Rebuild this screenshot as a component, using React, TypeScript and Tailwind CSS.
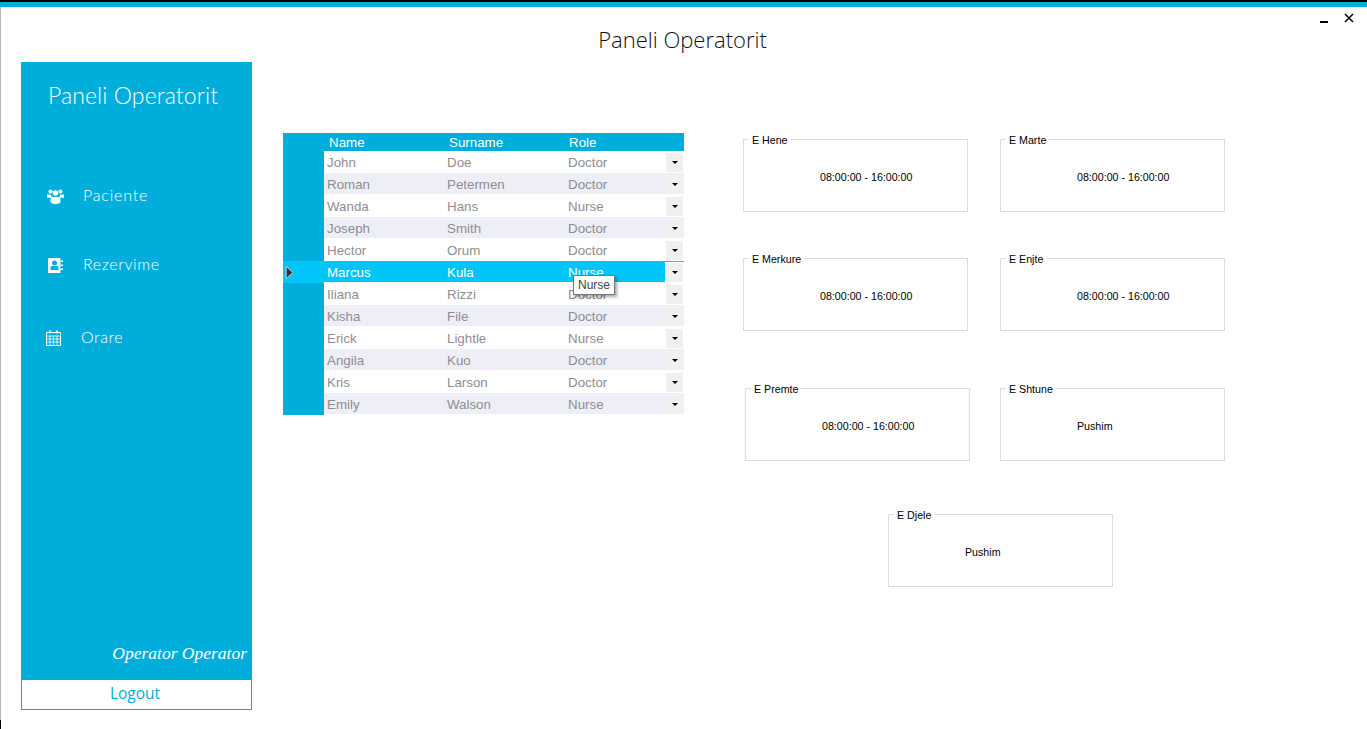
import React from 'react';

const staff = [
  ['John', 'Doe', 'Doctor'],
  ['Roman', 'Petermen', 'Doctor'],
  ['Wanda', 'Hans', 'Nurse'],
  ['Joseph', 'Smith', 'Doctor'],
  ['Hector', 'Orum', 'Doctor'],
  ['Marcus', 'Kula', 'Nurse'],
  ['Iliana', 'Rizzi', 'Doctor'],
  ['Kisha', 'File', 'Doctor'],
  ['Erick', 'Lightle', 'Nurse'],
  ['Angila', 'Kuo', 'Doctor'],
  ['Kris', 'Larson', 'Doctor'],
  ['Emily', 'Walson', 'Nurse'],
];

const UsersIcon = () => (
  <svg width="17" height="15" viewBox="0 0 17 15" fill="#fff">
    <circle cx="3.5" cy="2.5" r="2" />
    <circle cx="13.5" cy="2.5" r="2" />
    <circle cx="8.5" cy="4" r="2.8" />
    <path d="M0 5.5h3.6c.2 1 .7 1.8 1.4 2.3-.5.2-.9.5-1.2 1H0zM17 5.5h-3.6c-.2 1-.7 1.8-1.4 2.3.5.2.9.5 1.2 1H17z" />
    <path d="M5.6 8h5.8c1.4 0 2.1 1 2.1 2.4v2.2c0 1.4-1.6 2.4-5 2.4s-5-1-5-2.4v-2.2C3.500 9 4.200 8 5.600 8z" />
  </svg>
);

const BookIcon = () => (
  <svg width="15" height="15" viewBox="0 0 15 15">
    <rect x="0" y="0" width="12.500" height="15" rx="0.500" fill="#fff" />
    <path d="M13 2.500h2v1.500h-2zM13 6.500h2v1.500h-2zM13 10.500h2v1.500h-2z" fill="#fff" />
    <circle cx="6.500" cy="5" r="2.500" fill="#00aedb" />
    <path d="M2.500 12v-2c0-1.200 1-2 2-2h4c1 0 2 .8 2 2v2z" fill="#00aedb" />
  </svg>
);

const CalendarIcon = () => (
  <svg width="15" height="16" viewBox="0 0 15 16" fill="none" stroke="#fff" strokeWidth="1">
    <path d="M.5 2.500h14v13H.5z" />
    <path d="M.5 6h14M.5 9h14M.5 12h14M4 6v9.500M7.500 6v9.500M11 6v9.500" strokeWidth="0.800" />
    <path d="M4 .5v3M11 .5v3" strokeWidth="1.600" />
  </svg>
);

const DayBox = ({ day, hours }: { day: string; hours: string }) => (
  <fieldset className="w-[225px] h-[79px] border border-[#dcdcdc] px-0">
    <legend className="ml-[5px] px-[3px] pt-[1px] text-[10.67px] leading-[12px] text-black">{day}</legend>
    <p className="pl-[76px] pt-[25px] text-[10.67px] leading-[13px] text-black">{hours}</p>
  </fieldset>
);

const App = () => {
  return (
    <div className="relative w-[1367px] h-[729px] overflow-hidden bg-white font-['Liberation_Sans',sans-serif]">
      <div className="h-[2px] bg-black" />
      <div className="h-[5px] bg-[#00aedb]" />
      <div className="h-[713px] border-l border-[#b4b4b4]">
        <header className="relative h-[55px] flex justify-center pt-[16px]">
          <h1 className="mr-[3px] font-['Open_Sans',sans-serif] font-light text-[22px] leading-[32px] text-[#111]">Paneli Operatorit</h1>
          <div className="absolute right-[13px] top-[5px] flex items-start gap-[16px]">
            <div className="mt-[9px] w-[8px] h-[2px] bg-black" />
            <svg width="10" height="10" viewBox="0 0 10 10" className="mt-[1px]" stroke="#000" strokeWidth="1.5" fill="none">
              <path d="M1 1l8 8M9 1l-8 8" />
            </svg>
          </div>
        </header>

        <div className="flex items-start">
          <aside className="ml-[20px] w-[231px] h-[648px] flex flex-col font-['Lato',sans-serif] text-white bg-[#00aedb]">
            <div className="pl-[27px] pt-[17px] text-[23px] leading-[32px] font-light tracking-[0.1px]">Paneli Operatorit</div>
            <nav className="flex-1 font-light">
              <div className="flex items-center pl-[26px] mt-[73px] h-[24px]">
                <UsersIcon />
                <span className="ml-[19px] -mt-[3px] text-[16px] tracking-[0.8px]">Paciente</span>
              </div>
              <div className="flex items-center pl-[27px] mt-[45px] h-[24px]">
                <BookIcon />
                <span className="ml-[20px] -mt-[3px] text-[16px] tracking-[0.6px]">Rezervime</span>
              </div>
              <div className="flex items-center pl-[25px] mt-[49px] h-[24px]">
                <CalendarIcon />
                <span className="ml-[20px] -mt-[3px] text-[16px] tracking-[0.6px]">Orare</span>
              </div>
            </nav>
            <div className="pb-[15px] pr-[5px] text-right font-['Liberation_Serif',serif] italic text-[17.500px] leading-[22px]">Operator Operator</div>
            <div className="h-[31px] bg-white border border-[#00aedb] flex items-center justify-center pr-[3px] pb-[1px] font-['Open_Sans',sans-serif] text-[15.500px] text-[#00aedb]">Logout</div>
          </aside>

          <section className="ml-[31px] mt-[71px] w-[401px] text-[13.33px]">
            <div className="flex h-[18px] bg-[#00aedb] text-white leading-[19px]">
              <span className="ml-[46px] w-[120px]">Name</span>
              <span className="w-[120px]">Surname</span>
              <span>Role</span>
            </div>
            {staff.map((row, idx) => {
              const selected = idx === 5;
              const alt = idx % 2 === 1;
              return (
                <div key={row[0]} className="relative flex h-[22px] bg-white">
                  <div className={`w-[41px] flex items-center pl-[2px] ${selected ? 'bg-[#00c5f8]' : 'bg-[#00aedb]'}`}>
                    {selected && (
                      <svg width="9" height="13" viewBox="0 0 8 12">
                        <path d="M1 .5l6 5.500-6 5.500z" fill="#333" stroke="#ddd" strokeWidth="0.700" />
                      </svg>
                    )}
                  </div>
                  <div
                    className={`flex-1 flex items-center h-[21px] pt-[3px] ${
                      selected ? 'bg-[#00c5f8] text-white' : alt ? 'bg-[#eeeef7] text-[#918c92]' : 'text-[#918c92]'
                    }`}
                  >
                    <span className="ml-[3px] w-[120px]">{row[0]}</span>
                    <span className="w-[121px]">{row[1]}</span>
                    <span className="w-[98px]">{row[2]}</span>
                    <span
                      className={`w-[17px] h-[19px] -mt-[2px] bg-[#f0f0f0] flex items-center justify-center ${
                        selected ? 'outline outline-1 outline-white' : ''
                      }`}
                    >
                      <span className="border-x-[3px] border-t-[3px] border-x-transparent border-t-black" />
                    </span>
                  </div>
                  {selected && (
                    <div className="absolute left-[290px] top-[14px] h-[20px] px-[4px] bg-white border border-[#767676] shadow-[2px_2px_3px_rgba(0,0,0,0.35)] text-[12px] leading-[18px] text-[#444] z-10">
                      Nurse
                    </div>
                  )}
                </div>
              );
            })}
          </section>

          <section className="ml-[59px] mt-[71px]">
            <div className="flex gap-[32px]">
              <DayBox day="E Hene" hours="08:00:00 - 16:00:00" />
              <DayBox day="E Marte" hours="08:00:00 - 16:00:00" />
            </div>
            <div className="flex gap-[32px] mt-[40px]">
              <DayBox day="E Merkure" hours="08:00:00 - 16:00:00" />
              <DayBox day="E Enjte" hours="08:00:00 - 16:00:00" />
            </div>
            <div className="flex gap-[30px] mt-[51px] ml-[2px]">
              <DayBox day="E Premte" hours="08:00:00 - 16:00:00" />
              <DayBox day="E Shtune" hours="Pushim" />
            </div>
            <div className="mt-[47px] ml-[145px]">
              <DayBox day="E Djele" hours="Pushim" />
            </div>
          </section>
        </div>
      </div>
      <div className="h-[9px] w-px bg-black" />
    </div>
  );
};

export default App;
